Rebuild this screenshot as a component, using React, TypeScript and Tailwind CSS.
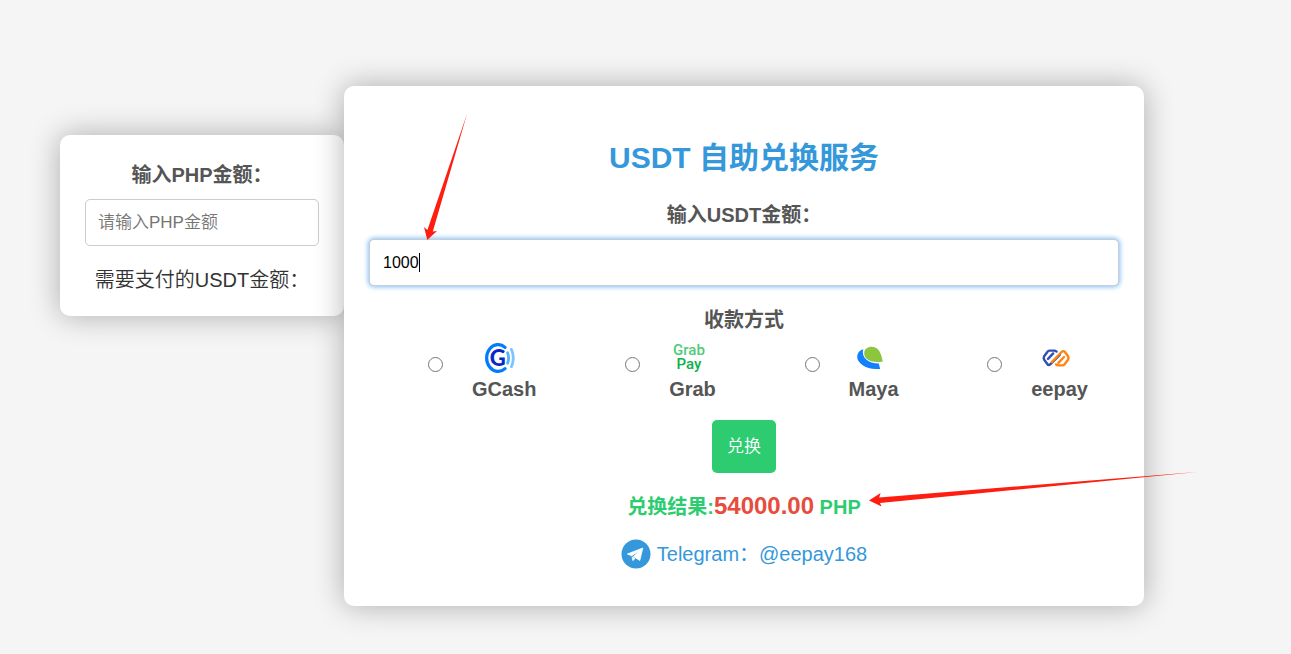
import { useState } from "react";
import type { ReactNode } from "react";

const RATE = 54;

const GCashIcon = () => (
  <svg viewBox="0 0 30 30" className="size-[30px]" aria-hidden="true">
    <g fill="none">
      <path d="M20 4.4 A11.4 13.4 0 1 0 20 25.6" stroke="#007dfe" strokeWidth="3.2" strokeLinecap="round" />
      <path d="M22.6 9.8 Q24.6 15 22.6 20.2" stroke="#57b0fb" strokeWidth="2.8" strokeLinecap="round" />
      <path d="M26.4 6.4 Q30.2 15 26.4 23.6" stroke="#7cc5fc" strokeWidth="2.8" strokeLinecap="round" />
    </g>
    <text x="12.8" y="23" textAnchor="middle" fontFamily="Lato, sans-serif" fontWeight="900" fontSize="22" fill="#0529c6">
      G
    </text>
  </svg>
);

const GrabIcon = () => (
  <svg viewBox="0 0 30 30" className="size-[30px] overflow-visible" aria-hidden="true">
    <g textAnchor="middle" fontFamily="Roboto, sans-serif" fontSize="15" fontWeight="500">
      <text x="15" y="12" fill="#4fcb7b">
        Grab
      </text>
      <text x="15" y="26" fill="#0bb14a">
        Pay
      </text>
    </g>
  </svg>
);

const MayaIcon = () => (
  <svg viewBox="0 0 30 30" className="size-[30px]" aria-hidden="true">
    <path d="M8.2 6.2 C2.3 8 0.4 14 4.2 19 C8.5 24.5 16 26.3 25.2 26 L23.8 20.6 C13.5 20.2 6 14.8 8.2 6.2 Z" fill="#1580ff" />
    <path d="M9.2 10 C9.3 6 13 3.6 17 3.8 C24.5 4.2 26.5 12 27.8 18.4 C22 19.5 15 19 11.6 15.8 C9.9 14.2 9.1 12 9.2 10 Z" fill="#8cc63f" />
  </svg>
);

const EepayIcon = () => (
  <svg viewBox="0 0 30 30" className="size-[30px]" aria-hidden="true">
    <g fill="none" strokeWidth="2.4" strokeLinecap="round" strokeLinejoin="round">
      <path
        d="M15.6 8.6 Q14.4 7.6 13.2 7.6 L8.4 7.6 Q7.2 7.6 6.3 9 L3.2 13.2 Q2.2 15 3.2 16.8 L6.3 21 Q7.4 22.6 9 21.6 L18.8 11.8"
        stroke="#2f4fb5"
      />
      <path d="M7 15.8 L12.2 10.4" stroke="#2f4fb5" />
      <path
        d="M10.8 19.2 L20.6 9 Q22.4 7.2 24 9 L27 13.2 Q28 15 27 16.8 L23.8 21 Q22.8 22.4 21 22.4 L17.6 22.4 Q16 22.4 15 21.4"
        stroke="#ff8412"
      />
      <path d="M23 14 L17.4 19.8" stroke="#ff8412" />
    </g>
  </svg>
);

const methods: { id: string; name: string; icon: ReactNode }[] = [
  { id: "gcash", name: "GCash", icon: <GCashIcon /> },
  { id: "grab", name: "Grab", icon: <GrabIcon /> },
  { id: "maya", name: "Maya", icon: <MayaIcon /> },
  { id: "eepay", name: "eepay", icon: <EepayIcon /> },
];

const TelegramIcon = () => (
  <svg viewBox="0 0 30 30" className="size-[30px]" aria-hidden="true">
    <circle cx="15" cy="15" r="14.5" fill="#3498db" />
    <path
      d="M21.8 9 L6.4 15 L10.6 16.8 L18.4 11.8 L12.4 17.6 L18.8 21.4 Z M11.2 18 L11.8 21.6 L14 19.6 Z"
      fill="#fff"
      stroke="#fff"
      strokeWidth="0.8"
      strokeLinejoin="round"
    />
  </svg>
);

const Pointers = () => (
  <svg width="1291" height="654" className="pointer-events-none absolute top-0 left-0 z-20" fill="#ff1d0f" aria-hidden="true">
    <path d="M467 114 L432.8 231.6 L437 231 L427.3 240 L424 227 L427.4 230 Z" />
    <path d="M1197 472 L880 503 L881.6 506.6 L869 500.6 L880.6 493 L879.2 497.4 Z" />
  </svg>
);

const App = () => {
  const [usdt, setUsdt] = useState("1000");
  const [php, setPhp] = useState("");
  const [method, setMethod] = useState("");
  const [result, setResult] = useState("54000.00");

  const convert = () => setResult((Number(usdt) * RATE).toFixed(2));

  return (
    <div className="relative min-h-screen overflow-hidden bg-[#f5f5f5] font-['Liberation_Sans','Noto_Sans_CJK_SC',sans-serif] text-xl leading-[30px] text-[#333]">
      <div className="flex items-start pt-[86px] pr-[147px] pb-12 pl-[60px]">
        <section className="mt-[49px] w-[284px] shrink-0 rounded-[10px] bg-white px-[25px] pt-[25px] pb-[21px] text-center shadow-[0_0_30px_rgba(0,0,0,0.3)]">
          <label htmlFor="php" className="mb-[9px] block font-bold text-[#555]">
            输入PHP金额：
          </label>
          <input
            id="php"
            type="text"
            value={php}
            onChange={(e) => setPhp(e.target.value)}
            placeholder="请输入PHP金额"
            className="block h-[47px] w-full rounded-[5px] border border-[#ccc] bg-white px-3 text-[17px] font-[350] text-black outline-none placeholder:text-[#757575]"
          />
          <p className="mt-[19px] font-[350]">需要支付的USDT金额：{php && (Number(php) / RATE).toFixed(2)}</p>
        </section>

        <main className="relative z-10 min-w-0 flex-1 rounded-[10px] bg-white px-[25px] pt-[52px] pb-[37px] text-center shadow-[0_0_30px_rgba(0,0,0,0.3)]">
          <h1 className="text-3xl leading-10 font-bold text-[#3498db]">USDT 自助兑换服务</h1>

          <label htmlFor="usdt" className="mt-[22px] mb-[9px] block font-bold text-[#555]">
            输入USDT金额：
          </label>
          <div className="relative">
            <input
              id="usdt"
              type="text"
              value={usdt}
              onChange={(e) => setUsdt(e.target.value)}
              className="block h-[47px] w-full rounded-[5px] border border-[#ccc] bg-white px-[13px] text-base text-black shadow-[0_0_5px_1px_#80bdff] outline-none"
            />
            <span className="absolute top-[14px] left-[50px] h-[19px] w-px bg-black" />
          </div>

          <fieldset className="mt-[19px]">
            <legend className="mx-auto font-bold text-[#555]">收款方式</legend>
            <div className="mt-2 flex justify-between pr-[31px] pl-[59px]">
              {methods.map(({ id, name, icon }) => (
                <label key={id} className="flex items-start gap-[29px] font-bold text-[#555]">
                  <input
                    type="radio"
                    name="method"
                    value={id}
                    checked={method === id}
                    onChange={() => setMethod(id)}
                    className="mt-[14px] size-[15px]"
                  />
                  <span className="flex flex-col items-center gap-px">
                    <span className="pr-2">{icon}</span>
                    {name}
                  </span>
                </label>
              ))}
            </div>
          </fieldset>

          <button type="button" onClick={convert} className="mt-4 h-[53px] rounded-[5px] bg-[#2ecc71] px-[15px] text-[17px] font-[350] text-white">
            兑换
          </button>

          <p className="mt-[18px] font-bold text-[#2ecc71]">
            兑换结果:<span className="text-2xl leading-[30px] text-[#e74c3c]">{result}</span> PHP
          </p>

          <a href="https://t.me/eepay168" className="mx-auto mt-[17px] flex w-fit items-center gap-[6px] text-[#3498db]">
            <TelegramIcon />
            Telegram：@eepay168
          </a>
        </main>
      </div>
      <Pointers />
    </div>
  );
};

export default App;
